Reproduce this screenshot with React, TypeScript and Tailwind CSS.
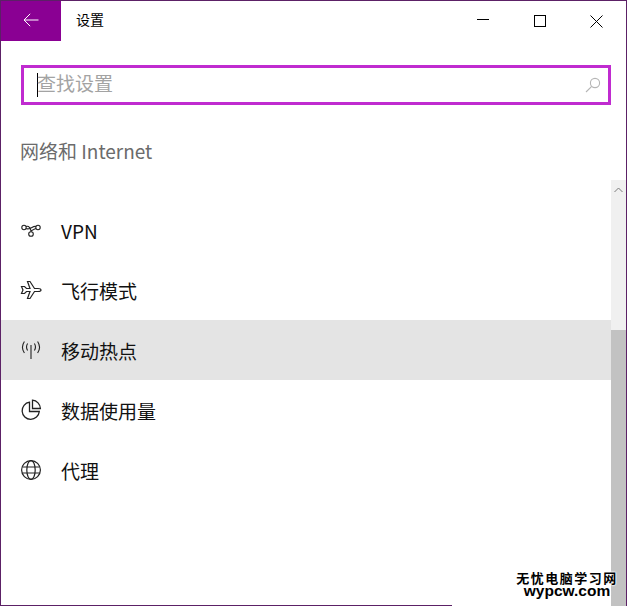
import { ReactNode } from "react";

const cjk = '"Noto Sans CJK SC", "Noto Sans", sans-serif';

const VpnIcon = () => (
  <svg width="20" height="20" viewBox="0 0 20 20" fill="none" stroke="#222" strokeWidth="1.1">
    <circle cx="3" cy="7.5" r="2.2" />
    <circle cx="17" cy="7.5" r="2.2" />
    <circle cx="10" cy="14" r="2.3" />
    <path d="M5 8.5 C8 10.5 12 5.5 15 6.5 M5 6.5 C8 5.5 10 8.5 10 11.7 M15 8.5 C13 9.5 10.5 9.5 10 11.7" />
  </svg>
);

const PlaneIcon = () => (
  <svg width="22" height="22" viewBox="0 0 22 22" fill="none" stroke="#222" strokeWidth="1.2" strokeLinejoin="miter">
    <path d="M1.5 7.5 H4.5 L6.5 9.5 H10 L7.5 2.5 H10 L14.5 9.5 H18 C20 9.5 21 10.3 21 11 C21 11.7 20 12.5 18 12.5 H14.5 L10 19.5 H7.5 L10 12.5 H6.5 L4.5 14.5 H1.5 L3 11 Z" />
  </svg>
);

const HotspotIcon = () => (
  <svg width="20" height="20" viewBox="0 0 20 20" fill="none" stroke="#222" strokeWidth="1.1">
    <path d="M10 5 V19" />
    <path d="M6.6 3.5 C5.3 5.6 5.3 8.4 6.6 10.5 M13.4 3.5 C14.7 5.6 14.7 8.4 13.4 10.5" />
    <path d="M3.4 1.5 C1 5 1 9.5 3.4 13 M16.6 1.5 C19 5 19 9.5 16.6 13" />
  </svg>
);

const PieIcon = () => (
  <svg width="22" height="22" viewBox="0 0 22 22" fill="none" stroke="#222" strokeWidth="1.3">
    <path d="M9.5 3.2 A8.6 8.6 0 1 0 19.3 12.5 H9.5 Z" />
    <path d="M12.5 1.2 A8.6 8.6 0 0 1 20.4 9.5 H12.5 Z" />
  </svg>
);

const GlobeIcon = () => (
  <svg width="22" height="22" viewBox="0 0 22 22" fill="none" stroke="#222" strokeWidth="1.2">
    <circle cx="11" cy="11" r="9.4" />
    <ellipse cx="11" cy="11" rx="4.2" ry="9.4" />
    <path d="M2.2 8 H19.8 M2.2 14 H19.8" />
  </svg>
);

const rows: { title: string; icon: ReactNode; active?: boolean }[] = [
  { title: "VPN", icon: <VpnIcon /> },
  { title: "飞行模式", icon: <PlaneIcon /> },
  { title: "移动热点", icon: <HotspotIcon />, active: true },
  { title: "数据使用量", icon: <PieIcon /> },
  { title: "代理", icon: <GlobeIcon /> },
];

export default function App() {
  return (
    <div
      className="relative flex h-[606px] w-[627px] flex-col overflow-hidden border-x border-t border-[#5c2166] bg-white"
      style={{ fontFamily: cjk }}
    >
      {/* title bar */}
      <div className="flex h-10 shrink-0 items-center">
        <div className="flex h-10 w-[60px] items-center justify-center bg-[#8a0093]">
          <svg className="-mt-[2px]" width="16" height="14" viewBox="0 0 16 14" fill="none" stroke="#fff" strokeWidth="1">
            <path d="M15.5 7 H1 M7.2 .8 L1 7 L7.2 13.2" />
          </svg>
        </div>
        <div className="ml-[15px] -mt-[3px] text-[14px] text-black">设置</div>
        <div className="ml-auto flex h-10 items-center">
          <div className="flex w-[57px] justify-center">
            <div className="-mt-[2px] h-px w-3 bg-black" />
          </div>
          <div className="flex w-[57px] justify-center">
            <div className="h-3 w-3 border border-black" />
          </div>
          <div className="mr-[1px] flex w-[57px] justify-center">
            <svg width="13" height="13" viewBox="0 0 13 13" stroke="#000" strokeWidth="1">
              <path d="M.5 .5 L12.5 12.5 M12.5 .5 L.5 12.5" />
            </svg>
          </div>
        </div>
      </div>

      {/* search */}
      <div className="mx-5 mt-6 flex h-10 w-[590px] shrink-0 items-center border-[3px] border-[#c02bd0] pl-[13px] pr-[7px]">
        <div className="h-[24px] w-px bg-black" />
        <span className="-ml-px -mt-[3px] flex-1 text-[19px] text-[#a3a3a3]">查找设置</span>
        <svg width="16" height="16" viewBox="0 0 16 16" fill="none" stroke="#b5b5b5" strokeWidth="1.1">
          <circle cx="10" cy="6" r="4.6" />
          <path d="M6.7 9.3 L1 15" />
        </svg>
      </div>

      <h1 className="ml-[19px] mt-[31px] h-[44px] shrink-0 text-[19px] leading-[29px] font-normal text-[#6b6b6b]">
        网络和 Internet
      </h1>

      <div className="flex min-h-0 flex-1">
        <div className="flex-1 pt-5">
          {rows.map((row) => (
            <div
              key={row.title}
              className={`flex h-[60px] items-center ${row.active ? "bg-[#e4e4e4]" : ""}`}
            >
              <div className="flex w-[60px] shrink-0 justify-center">{row.icon}</div>
              <span className="mt-[2px] text-[19px] text-[#111]">{row.title}</span>
            </div>
          ))}
        </div>
        {/* scrollbar */}
        <div className="flex w-[15px] shrink-0 flex-col bg-[#f0f0f0]">
          <div className="flex h-5 items-center justify-center">
            <svg width="9" height="6" viewBox="0 0 9 6" fill="none" stroke="#7a7a7a" strokeWidth="1">
              <path d="M.5 5 L4.5 1 L8.5 5" />
            </svg>
          </div>
          <div className="mt-[130px] flex-1 bg-[#c2c2c2]" />
        </div>
      </div>

      {/* bottom edge of the window, partly cut off */}
      <div className="absolute bottom-0 left-0 h-px w-[451px] bg-[#5c2166]" />

      {/* watermark */}
      <div
        className="absolute left-[515px] top-[569px] w-[102px] text-center font-bold whitespace-nowrap text-black"
        style={{ textShadow: "0 0 2px #fff, 0 0 2px #fff, 0 0 2px #fff" }}
      >
        <div className="text-[13px] leading-[15px] tracking-[1.5px]">无忧电脑学习网</div>
        <div
          className="text-[15.5px] leading-[12px]"
          style={{ fontFamily: '"Liberation Sans", sans-serif' }}
        >
          wypcw.com
        </div>
      </div>
    </div>
  );
}
